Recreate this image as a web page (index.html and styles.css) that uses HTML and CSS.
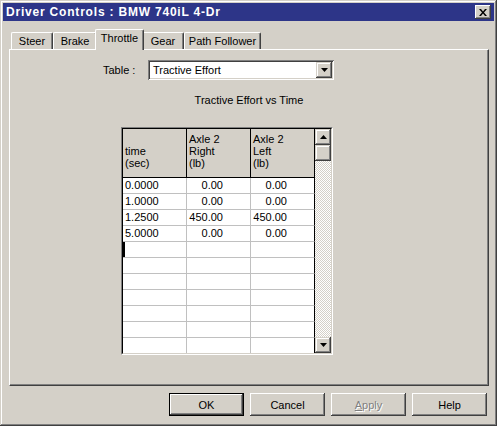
FILE: index.html
```html
<!DOCTYPE html>
<html lang="en">
<head>
    <meta charset="UTF-8">
    <title>Driver Controls : BMW 740iL 4-Dr</title>
    <link rel="stylesheet" href="styles.css">
</head>
<body>

    <div class="window">

        <!-- Title bar -->
        <div class="titlebar">
            <span class="title">Driver Controls : BMW 740iL 4-Dr</span>
            <button class="close-btn">
                <svg width="8" height="7" viewBox="0 0 8 7"><path d="M0 0h2l2 2.5L6 0h2L5 3.5 8 7H6L4 4.5 2 7H0l3-3.5z" fill="#000"/></svg>
            </button>
        </div>

        <div class="dialog-body">

            <!-- Tabs -->
            <div class="tabs">
                <div class="tab tab-steer">Steer</div>
                <div class="tab tab-brake">Brake</div>
                <div class="tab tab-throttle active">Throttle</div>
                <div class="tab tab-gear">Gear</div>
                <div class="tab tab-path">Path Follower</div>
            </div>

            <!-- Throttle page -->
            <div class="panel">
                <div class="table-row">
                    <label class="table-label">Table :</label>
                    <div class="select">
                        <span class="select-value">Tractive Effort</span>
                        <span class="drop-btn">
                            <svg width="7" height="4" viewBox="0 0 7 4"><polygon points="0,0 7,0 3.5,4" fill="#000"/></svg>
                        </span>
                    </div>
                </div>

                <div class="caption">Tractive Effort vs Time</div>

                <div class="grid-frame">
                    <div class="grid">
                        <table class="data-table">
                            <thead>
                                <tr>
                                    <th>time<br>(sec)</th>
                                    <th>Axle 2<br>Right<br>(lb)</th>
                                    <th>Axle 2<br>Left<br>(lb)</th>
                                </tr>
                            </thead>
                            <tbody>
                                <tr><td>0.0000</td><td class="num">0.00</td><td class="num">0.00</td></tr>
                                <tr><td>1.0000</td><td class="num">0.00</td><td class="num">0.00</td></tr>
                                <tr><td>1.2500</td><td class="num">450.00</td><td class="num">450.00</td></tr>
                                <tr><td>5.0000</td><td class="num">0.00</td><td class="num">0.00</td></tr>
                                <tr><td class="cursor"></td><td></td><td></td></tr>
                                <tr><td></td><td></td><td></td></tr>
                                <tr><td></td><td></td><td></td></tr>
                                <tr><td></td><td></td><td></td></tr>
                                <tr><td></td><td></td><td></td></tr>
                                <tr><td></td><td></td><td></td></tr>
                                <tr><td></td><td></td><td></td></tr>
                            </tbody>
                        </table>

                        <!-- Vertical scrollbar -->
                        <div class="scrollbar">
                            <div class="sb-btn">
                                <svg width="7" height="4" viewBox="0 0 7 4"><polygon points="3.5,0 7,4 0,4" fill="#000"/></svg>
                            </div>
                            <div class="sb-btn thumb"></div>
                            <div class="sb-track"></div>
                            <div class="sb-btn">
                                <svg width="7" height="4" viewBox="0 0 7 4"><polygon points="0,0 7,0 3.5,4" fill="#000"/></svg>
                            </div>
                        </div>
                    </div>
                </div>
            </div>

            <!-- Dialog buttons -->
            <div class="buttons">
                <button class="btn default">OK</button>
                <button class="btn">Cancel</button>
                <button class="btn disabled"><u>A</u>pply</button>
                <button class="btn">Help</button>
            </div>
        </div>
    </div>

</body>
</html>
```

FILE: styles.css
```css
body {
    margin: 0;
    background-color: #d4d0c8;
    font-family: "Liberation Sans", Arial, sans-serif;
    font-size: 11px;
    color: #000;
}

.window {
    width: 497px;
    height: 426px;
    box-sizing: border-box;
    padding: 3px;
    background-color: #d4d0c8;
    box-shadow: inset -1px -1px #404040, inset 1px 1px #d4d0c8, inset -2px -2px #808080, inset 2px 2px #fff;
}

/* Title bar */
.titlebar {
    height: 18px;
    display: flex;
    align-items: center;
    padding: 0 3px 0 3px;
    background-color: #2d3588;
    color: #fff;
}

.title {
    font-weight: bold;
    font-size: 12px;
    letter-spacing: 0.8px;
}

.close-btn {
    margin-left: auto;
    width: 16px;
    height: 14px;
    padding: 0;
    border: none;
    display: flex;
    align-items: center;
    justify-content: center;
    background-color: #d4d0c8;
    box-shadow: inset -1px -1px #404040, inset 1px 1px #fff, inset -2px -2px #808080;
}

.dialog-body {
    padding: 8px 5px 0 6px;
}

/* Tabs */
.tabs {
    display: flex;
    align-items: flex-end;
    height: 20px;
    padding-left: 2px;
    position: relative;
    z-index: 1;
}

.tab {
    box-sizing: border-box;
    height: 17px;
    display: flex;
    align-items: center;
    justify-content: center;
    padding-bottom: 1px;
    border-top: 1px solid #fff;
    border-left: 1px solid #fff;
    border-right: 1px solid #404040;
    border-radius: 2px 2px 0 0;
    box-shadow: inset -1px 0 #808080;
    background-color: #d4d0c8;
}

.tab-steer { width: 42px; }
.tab-brake { width: 44px; }
.tab-throttle { width: 45px; }
.tab-gear { width: 42px; }
.tab-path { width: 77px; }

.tab.active {
    width: 49px;
    height: 21px;
    margin: 0 -2px -1px -2px;
    padding-bottom: 4px;
    position: relative;
    z-index: 2;
}

/* Page panel */
.panel {
    box-sizing: border-box;
    width: 480px;
    height: 337px;
    border-top: 1px solid #fff;
    border-left: 1px solid #fff;
    border-right: 1px solid #404040;
    border-bottom: 1px solid #404040;
    box-shadow: inset -1px -1px #808080;
}

.table-row {
    display: flex;
    align-items: center;
    padding: 10px 0 0 93px;
}

.table-label {
    width: 45px;
}

.select {
    box-sizing: border-box;
    width: 186px;
    height: 20px;
    display: flex;
    align-items: center;
    padding: 2px;
    background-color: #fff;
    box-shadow: inset 1px 1px #808080, inset -1px -1px #fff, inset 2px 2px #404040, inset -2px -2px #d4d0c8;
}

.select-value {
    flex: 1;
    padding-left: 3px;
}

.drop-btn,
.sb-btn {
    width: 16px;
    height: 16px;
    display: flex;
    align-items: center;
    justify-content: center;
    background-color: #d4d0c8;
    box-shadow: inset -1px -1px #404040, inset 1px 1px #d4d0c8, inset -2px -2px #808080, inset 2px 2px #fff;
}

.caption {
    margin-top: 14px;
    line-height: 12px;
    text-align: center;
}

/* Grid */
.grid-frame {
    width: 212px;
    height: 228px;
    box-sizing: border-box;
    margin: 21px 0 0 111px;
    border-top: 1px solid #808080;
    border-left: 1px solid #808080;
    border-right: 1px solid #fff;
    border-bottom: 1px solid #fff;
}

.grid {
    height: 224px;
    display: flex;
    overflow: hidden;
    border-top: 1px solid #000;
    border-left: 1px solid #000;
    border-right: 1px solid #d4d0c8;
    border-bottom: 1px solid #d4d0c8;
    background-color: #fff;
}

.data-table {
    width: 192px;
    height: 0;
    table-layout: fixed;
    border-collapse: separate;
    border-spacing: 0;
}

.data-table th {
    height: 40px;
    padding: 0 0 8px 2px;
    text-align: left;
    vertical-align: bottom;
    font-weight: normal;
    line-height: 12px;
    background-color: #d4d0c8;
    border-right: 1px solid #000;
    border-bottom: 1px solid #000;
}

.data-table td {
    height: 15px;
    padding: 0 0 0 2px;
    line-height: 15px;
    border-right: 1px solid #c0c0c0;
    border-bottom: 1px solid #c0c0c0;
}

.data-table td:last-child {
    border-right-color: #000;
}

.data-table td.num {
    text-align: right;
    padding-right: 27px;
}

.data-table td.cursor {
    box-shadow: inset 2px 0 #000;
}

.scrollbar {
    width: 16px;
    display: flex;
    flex-direction: column;
}

.sb-track {
    flex: 1;
    background-image: conic-gradient(#fff 25%, #d4d0c8 0 50%, #fff 0 75%, #d4d0c8 0);
    background-size: 2px 2px;
}

/* Dialog buttons */
.buttons {
    display: flex;
    justify-content: flex-end;
    gap: 6px;
    margin-top: 7px;
    padding-right: 2px;
}

.btn {
    width: 75px;
    height: 23px;
    padding: 0;
    border: none;
    font-family: "Liberation Sans", Arial, sans-serif;
    font-size: 11px;
    color: #000;
    background-color: #d4d0c8;
    box-shadow: inset -1px -1px #404040, inset 1px 1px #fff, inset -2px -2px #808080;
}

.btn.default {
    box-shadow: inset 0 0 0 1px #000, inset -2px -2px #404040, inset 2px 2px #fff, inset -3px -3px #808080;
}

.btn.disabled {
    color: #808080;
    text-shadow: 1px 1px #fff;
}

.btn u {
    text-decoration: underline;
}
```
